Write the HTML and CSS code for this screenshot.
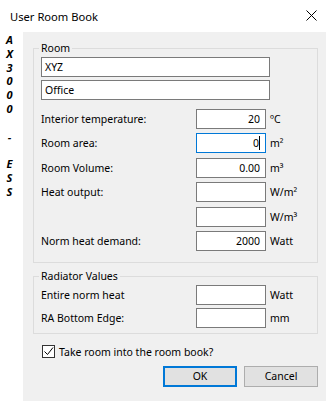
FILE: index.html
```html
<!DOCTYPE html>
<html lang="en">
<head>
    <meta charset="UTF-8">
    <title>User Room Book</title>
    <link rel="stylesheet" href="styles.css">
</head>
<body>
    <div class="window">
        <!-- Title bar -->
        <div class="titlebar">
            <span class="title">User Room Book</span>
            <svg class="close" width="11" height="11" viewBox="0 0 11 11">
                <path d="M0.5 0.5 L10.5 10.5 M10.5 0.5 L0.5 10.5" stroke="#000" stroke-width="1"/>
            </svg>
        </div>

        <div class="main">
            <div class="strip">A
X
3
0
0
0

-

E
S
S</div>

            <div class="panel">
                <!-- Room -->
                <fieldset class="group room">
                    <legend>Room</legend>
                    <div class="field wide">XYZ</div>
                    <div class="field wide">Office</div>

                    <div class="rows">
                        <div class="row">
                            <span class="label">Interior temperature:</span>
                            <div class="field num">20</div>
                            <span class="unit">ºC</span>
                        </div>
                        <div class="row">
                            <span class="label">Room area:</span>
                            <div class="field num focused">0<span class="caret"></span></div>
                            <span class="unit">m²</span>
                        </div>
                        <div class="row">
                            <span class="label">Room Volume:</span>
                            <div class="field num">0.00</div>
                            <span class="unit">m³</span>
                        </div>
                        <div class="row">
                            <span class="label">Heat output:</span>
                            <div class="field num"></div>
                            <span class="unit">W/m²</span>
                        </div>
                        <div class="row">
                            <span class="label"></span>
                            <div class="field num"></div>
                            <span class="unit">W/m³</span>
                        </div>
                        <div class="row">
                            <span class="label">Norm heat demand:</span>
                            <div class="field num">2000</div>
                            <span class="unit">Watt</span>
                        </div>
                    </div>
                </fieldset>

                <!-- Radiator Values -->
                <fieldset class="group radiator">
                    <legend>Radiator Values</legend>
                    <div class="rows tight">
                        <div class="row">
                            <span class="label">Entire norm heat</span>
                            <div class="field num"></div>
                            <span class="unit">Watt</span>
                        </div>
                        <div class="row">
                            <span class="label">RA Bottom Edge:</span>
                            <div class="field num"></div>
                            <span class="unit">mm</span>
                        </div>
                    </div>
                </fieldset>

                <label class="check">
                    <span class="box">
                        <svg width="11" height="11" viewBox="0 0 11 11">
                            <path d="M1.5 5.5 L4.5 8.5 L10 1.5" fill="none" stroke="#000" stroke-width="1"/>
                        </svg>
                    </span>
                    Take room into the room book?
                </label>

                <div class="buttons">
                    <button class="btn default">OK</button>
                    <button class="btn">Cancel</button>
                </div>
            </div>
        </div>
    </div>
</body>
</html>
```

FILE: styles.css
```css
body {
    margin: 0;
    background: #fff;
    font-family: "Noto Sans", Arial, sans-serif;
    font-size: 10.5px;
    color: #000;
}

.window {
    width: 328px;
    height: 401px;
    display: flex;
    flex-direction: column;
}

.titlebar {
    height: 32px;
    display: flex;
    align-items: center;
    justify-content: space-between;
    padding: 0 11px 0 10px;
}

.title {
    font-size: 11.2px;
}

.close {
    margin-top: -2px;
}

.main {
    flex: 1;
    display: flex;
}

.strip {
    width: 23px;
    padding-top: 1px;
    text-align: center;
    white-space: pre;
    font-weight: bold;
    font-style: italic;
    font-size: 11px;
    line-height: 13.8px;
    margin-left: -2px;
    margin-right: 2px;
}

.panel {
    width: 303px;
    background: #f0f0f0;
    padding: 9px 8px 0 10px;
    box-sizing: border-box;
}

.group {
    margin: 0;
    padding: 1px 7px 11px 7px;
    border: 1px solid #dcdcdc;
    min-inline-size: 0;
}

.group legend {
    padding: 0 2px;
    margin-left: -2px;
    line-height: 15px;
}

.field {
    height: 20px;
    box-sizing: border-box;
    border: 1px solid #7a7a7a;
    background: #fff;
    padding: 0 3px;
    line-height: 18px;
}

.field.wide {
    width: 229px;
}

.field.wide + .field.wide {
    margin-top: 3px;
}

.rows {
    margin-top: 9px;
    display: flex;
    flex-direction: column;
    gap: 4.4px;
}

.rows.tight {
    margin-top: 0;
    gap: 3px;
}

.row {
    display: flex;
    align-items: center;
}

.label {
    width: 155px;
}

.field.num {
    width: 70px;
    text-align: right;
    padding-right: 5px;
}

.field.focused {
    border-color: #0078d7;
}

.caret {
    display: inline-block;
    width: 1px;
    height: 14px;
    background: #000;
    vertical-align: -3px;
}

.unit {
    margin-left: 4px;
}

.radiator {
    margin-top: 6px;
    padding-bottom: 5px;
}

.check {
    display: flex;
    align-items: center;
    gap: 4px;
    margin: 11px 0 0 9px;
}

.box {
    width: 13px;
    height: 13px;
    box-sizing: border-box;
    border: 1px solid #333;
    background: #fff;
    display: flex;
    align-items: center;
    justify-content: center;
}

.buttons {
    display: flex;
    justify-content: flex-end;
    gap: 7px;
    margin-top: 7px;
}

.btn {
    width: 74px;
    height: 21px;
    box-sizing: border-box;
    font-family: "Noto Sans", Arial, sans-serif;
    font-size: 10.5px;
    background: #e1e1e1;
    border: 1px solid #adadad;
    padding: 0;
    color: #000;
}

.btn.default {
    border: 2px solid #0078d7;
}
```
